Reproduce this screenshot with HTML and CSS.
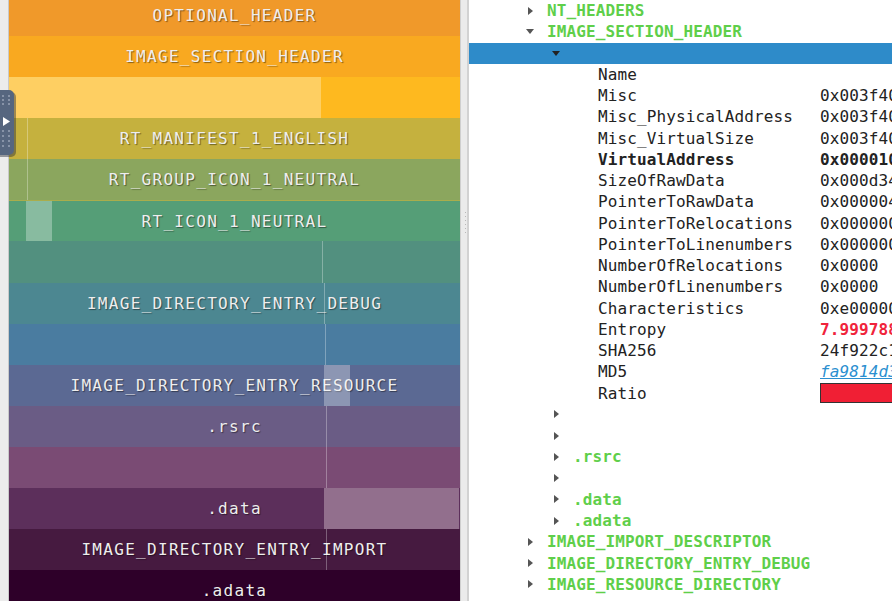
FILE: index.html
```html
<!DOCTYPE html>
<html lang="en">
<head>
  <meta charset="UTF-8">
  <title>Section Map</title>
  <link rel="stylesheet" href="styles.css">
</head>
<body>

  <!-- Left strip with drawer handle -->
  <div class="strip">
    <svg class="handle" width="16" height="67" viewBox="0 0 16 67">
      <rect x="-6" y="0" width="20" height="65" rx="5" fill="#2a2f3a" opacity="0.45" transform="translate(2 2)"/>
      <rect x="-6" y="0" width="20" height="65" rx="5" fill="#56667f"/>
      <g fill="#8793a8">
        <rect x="2" y="5" width="2" height="2"/><rect x="8" y="5" width="2" height="2"/>
        <rect x="2" y="9" width="2" height="2"/><rect x="8" y="9" width="2" height="2"/>
        <rect x="2" y="13" width="2" height="2"/><rect x="8" y="13" width="2" height="2"/>
        <rect x="2" y="40" width="2" height="2"/><rect x="8" y="40" width="2" height="2"/>
        <rect x="2" y="45" width="2" height="2"/><rect x="8" y="45" width="2" height="2"/>
        <rect x="2" y="50" width="2" height="2"/><rect x="8" y="50" width="2" height="2"/>
        <rect x="2" y="55" width="2" height="2"/><rect x="8" y="55" width="2" height="2"/>
      </g>
      <polygon points="3,27 10,31.5 3,36" fill="#ffffff"/>
    </svg>
  </div>

  <!-- Section map -->
  <div class="map">
    <div class="band first c-opt">OPTIONAL_HEADER</div>
    <div class="band c-ish">IMAGE_SECTION_HEADER</div>
    <div class="band split">
      <div class="part c-yl1"></div>
      <div class="part c-yl2"></div>
    </div>
    <div class="band c-man mark-l">RT_MANIFEST_1_ENGLISH</div>
    <div class="band c-grp mark-l">RT_GROUP_ICON_1_NEUTRAL</div>
    <div class="band c-ico block-l">RT_ICON_1_NEUTRAL</div>
    <div class="band c-b1 mark-r1"></div>
    <div class="band c-dbg mark-r2">IMAGE_DIRECTORY_ENTRY_DEBUG</div>
    <div class="band c-b2 mark-r3"></div>
    <div class="band c-res block-r">IMAGE_DIRECTORY_ENTRY_RESOURCE</div>
    <div class="band c-rsrc mark-r4">.rsrc</div>
    <div class="band c-b3 mark-r4"></div>
    <div class="band c-data block-wide">.data</div>
    <div class="band c-imp mark-r4">IMAGE_DIRECTORY_ENTRY_IMPORT</div>
    <div class="band c-adata">.adata</div>
  </div>

  <!-- Splitter -->
  <div class="splitter"><span class="grip"></span></div>

  <!-- Tree -->
  <div class="tree">
    <div class="row lv1"><i class="tw closed"></i><span class="key">NT_HEADERS</span></div>
    <div class="row lv1"><i class="tw open"></i><span class="key">IMAGE_SECTION_HEADER</span></div>
    <div class="row lv2 selected"><i class="tw open"></i></div>

    <div class="row field"><span class="name">Name</span><span class="val"></span></div>
    <div class="row field"><span class="name">Misc</span><span class="val">0x003f4000</span></div>
    <div class="row field"><span class="name">Misc_PhysicalAddress</span><span class="val">0x003f4000</span></div>
    <div class="row field"><span class="name">Misc_VirtualSize</span><span class="val">0x003f4000</span></div>
    <div class="row field strong"><span class="name">VirtualAddress</span><span class="val">0x00001000</span></div>
    <div class="row field"><span class="name">SizeOfRawData</span><span class="val">0x000d3400</span></div>
    <div class="row field"><span class="name">PointerToRawData</span><span class="val">0x00000400</span></div>
    <div class="row field"><span class="name">PointerToRelocations</span><span class="val">0x00000000</span></div>
    <div class="row field"><span class="name">PointerToLinenumbers</span><span class="val">0x00000000</span></div>
    <div class="row field"><span class="name">NumberOfRelocations</span><span class="val">0x0000</span></div>
    <div class="row field"><span class="name">NumberOfLinenumbers</span><span class="val">0x0000</span></div>
    <div class="row field"><span class="name">Characteristics</span><span class="val">0xe0000060</span></div>
    <div class="row field"><span class="name">Entropy</span><span class="val entropy">7.99978837</span></div>
    <div class="row field"><span class="name">SHA256</span><span class="val">24f922c1a7b3</span></div>
    <div class="row field"><span class="name">MD5</span><span class="val"><a class="hash" href="#">fa9814d3e2c0</a></span></div>
    <div class="row field"><span class="name">Ratio</span><span class="val"><span class="ratio"></span></span></div>

    <div class="row lv2"><i class="tw closed"></i></div>
    <div class="row lv2"><i class="tw closed"></i></div>
    <div class="row lv2"><i class="tw closed"></i><span class="key">.rsrc</span></div>
    <div class="row lv2"><i class="tw closed"></i></div>
    <div class="row lv2"><i class="tw closed"></i><span class="key">.data</span></div>
    <div class="row lv2"><i class="tw closed"></i><span class="key">.adata</span></div>
    <div class="row lv1"><i class="tw closed"></i><span class="key">IMAGE_IMPORT_DESCRIPTOR</span></div>
    <div class="row lv1"><i class="tw closed"></i><span class="key">IMAGE_DIRECTORY_ENTRY_DEBUG</span></div>
    <div class="row lv1"><i class="tw closed"></i><span class="key">IMAGE_RESOURCE_DIRECTORY</span></div>
  </div>

</body>
</html>
```

FILE: styles.css
```css
html, body {
  margin: 0;
  height: 601px;
  overflow: hidden;
}
body {
  display: flex;
  font-family: "DejaVu Sans Mono", monospace;
  font-size: 16px;
  color: #222;
  background-color: #fff;
}

/* left strip */
.strip {
  position: relative;
  width: 8px;
  flex: none;
  background-color: #ececec;
  border-right: 1px solid #c9c9c9;
}
.handle {
  position: absolute;
  left: 0;
  top: 90px;
  z-index: 5;
}

/* section map (scrolled a little, so the first band is cut) */
.map {
  width: 451px;
  flex: none;
  display: flex;
  flex-direction: column;
}
.band {
  position: relative;
  height: 41.1px;
  flex: none;
  display: flex;
  align-items: center;
  justify-content: center;
  color: #eeeeee;
  letter-spacing: 1.3px;
  text-shadow: 1px 1px 1px rgba(0,0,0,0.45);
  white-space: nowrap;
}
.band.first { margin-top: -5.1px; }
.band.split { align-items: stretch; }
.part { height: 100%; }

.c-opt { background-color: #f0992a; }
.c-ish { background-color: #f9a920; }
.c-yl1 { width: 312px; background-color: #fecf62; }
.c-yl2 { flex: 1; background-color: #feb91f; }
.c-man { background-color: #c5b13e; }
.c-grp { background-color: #8ba65e; }
.c-ico { background-color: #559e77; border-top: 1px solid #a9ad4c; box-sizing: border-box; }
.c-b1 { background-color: #52907f; }
.c-dbg { background-color: #4c8791; }
.c-b2 { background-color: #4a7ca0; }
.c-res { background-color: #5b6993; }
.c-rsrc { background-color: #6a5c85; }
.c-b3 { background-color: #7a4b74; }
.c-data { background-color: #5c2f5b; }
.c-imp { background-color: #461a40; }
.c-adata { background-color: #2e0029; }

/* nested region marks over the bands */
.mark-l::after,
.mark-r1::after,
.mark-r2::after,
.mark-r3::after,
.mark-r4::after,
.block-l::after,
.block-r::after,
.block-wide::after {
  content: "";
  position: absolute;
  top: 0;
  bottom: 0;
  width: 1px;
  background-color: rgba(255,255,255,0.3);
}
.mark-l::after { left: 18px; }
.mark-r1::after { left: 313px; }
.mark-r2::after { left: 315px; }
.mark-r3::after { left: 316px; }
.mark-r4::after { left: 317px; }
.block-l::after { left: 17px; width: 26px; }
.block-r::after { left: 315px; width: 26px; }
.block-wide::after {
  left: 315px;
  width: 135px;
  background-color: #926f8d;
}

/* splitter */
.splitter {
  position: relative;
  width: 6px;
  flex: none;
  background-color: #ebebeb;
  border-left: 1px solid #cfcfcf;
  border-right: 2px solid #d2d2d2;
}
.grip {
  position: absolute;
  left: 4px;
  top: 212px;
  width: 1px;
  height: 21px;
  background: repeating-linear-gradient(to bottom, #b8b8b8 0 1px, transparent 1px 4px);
}

/* tree */
.tree {
  flex: 1;
  overflow: hidden;
  white-space: nowrap;
  letter-spacing: 0.12px;
}
.row {
  height: 21.26px;
  line-height: 21.26px;
  display: flex;
  align-items: center;
}
.lv1 { padding-left: 59px; }
.lv2 { padding-left: 85px; }
.field { padding-left: 129px; }
.selected { background-color: #2e8bc9; }

.tw {
  width: 19px;
  flex: none;
  display: flex;
  align-items: center;
  height: 100%;
}
.tw::before {
  content: "";
  display: block;
  width: 0;
  height: 0;
}
.tw.closed::before {
  border-top: 4px solid transparent;
  border-bottom: 4px solid transparent;
  border-left: 5px solid #555;
}
.tw.open::before {
  margin-left: -2px;
  border-left: 4px solid transparent;
  border-right: 4px solid transparent;
  border-top: 5px solid #555;
}
.selected .tw.open::before { border-top-color: #222; }

.key {
  color: #5fcf4a;
  font-weight: bold;
}
.name {
  width: 222px;
  flex: none;
}
.val { flex: none; }
.strong { font-weight: bold; }
.entropy {
  color: #f0233b;
  font-weight: bold;
}
.hash {
  color: #2b8fd0;
  font-style: italic;
}
.ratio {
  display: block;
  width: 120px;
  height: 18px;
  background-color: #f01f34;
  border: 1px solid #333;
}
```
